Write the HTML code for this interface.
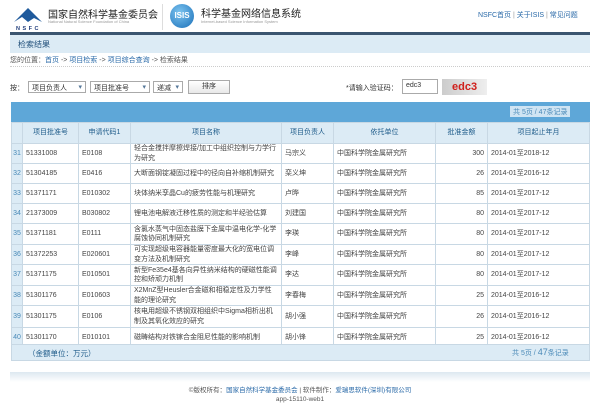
<!DOCTYPE html><html><head><meta charset="utf-8"><style>
*{margin:0;padding:0;box-sizing:border-box}
body{width:600px;height:408px;background:#fff;font-family:"Liberation Sans","Noto Sans CJK SC",sans-serif;font-size:7px;color:#333;position:relative;overflow:hidden}
.a{position:absolute;white-space:nowrap}
table{position:absolute;left:11px;top:122px;width:579px;border-collapse:collapse;table-layout:fixed}
td,th{border:1px solid #c8d8e4;font-size:7px;height:20px;padding:0 3px;line-height:9.5px;overflow:hidden}
th{background:#dcebf5;color:#1f5c8a;font-weight:normal;height:21px}
td.n{background:#dcebf5;color:#4a8ab8;padding:0 1px;text-align:center}
td{color:#444}
td.r{text-align:right}
.blue{color:#2a6aa8}
</style></head><body>
<svg class="a" style="left:12px;top:5px" width="38" height="26"><polygon points="2,17 16,3 30,17 22,13 16,17 10,12" fill="#1f5a9c"/><text x="4" y="25" font-size="5.5" font-weight="bold" fill="#1f3c7a" font-family="Liberation Sans" letter-spacing="2.5">NSFC</text></svg>
<div class="a" style="left:48px;top:6px;font-size:10px;color:#222">国家自然科学基金委员会</div>
<div class="a" style="left:48px;top:19px;font-size:4px;color:#999">National Natural Science Foundation of China</div>
<div class="a" style="left:162px;top:4px;width:1px;height:26px;background:#ddd"></div>
<div class="a" style="left:170px;top:4px;width:24px;height:24px;border-radius:50%;background:radial-gradient(circle at 40% 35%,#7cc4f0,#1a6fb8);color:#fff;font-size:8px;font-weight:bold;line-height:24px;text-align:center">ISIS</div>
<div class="a" style="left:201px;top:5px;font-size:10px;color:#222">科学基金网络信息系统</div>
<div class="a" style="left:201px;top:19px;font-size:4px;color:#999">Internet-based Science Information System</div>
<div class="a" style="left:478px;top:10px;font-size:7px;color:#2a6aa8">NSFC首页 <span style="color:#999">|</span> 关于ISIS <span style="color:#999">|</span> 常见问题</div>
<div class="a" style="left:10px;top:32px;width:580px;height:3px;background:#3b5570"></div>
<div class="a" style="left:10px;top:35px;width:580px;height:18px;background:#dcebf5;font-size:8px;color:#1f4e79;padding:4px 8px">检索结果</div>
<div class="a" style="left:10px;top:55px;font-size:7px;color:#555">您的位置：<span class="blue">首页</span> -&gt; <span class="blue">项目检索</span> -&gt; <span class="blue">项目综合查询</span> -&gt; 检索结果</div>
<div class="a" style="left:10px;top:66px;width:580px;border-top:1px dotted #ccc"></div>
<div class="a" style="left:10px;top:83px;font-size:7px">按：</div>
<div class="a" style="left:28px;top:81px;width:58px;height:12px;border:1px solid #aaa;font-size:7px;padding:1px 3px">项目负责人<span style="float:right;color:#579">▾</span></div>
<div class="a" style="left:90px;top:81px;width:60px;height:12px;border:1px solid #aaa;font-size:7px;padding:1px 3px">项目批准号<span style="float:right;color:#579">▾</span></div>
<div class="a" style="left:153px;top:81px;width:30px;height:12px;border:1px solid #aaa;font-size:7px;padding:1px 3px">递减<span style="float:right;color:#579">▾</span></div>
<div class="a" style="left:188px;top:80px;width:42px;height:14px;border:1px solid #aaa;background:linear-gradient(#fff,#e8e8e8);font-size:7px;text-align:center;line-height:12px">排序</div>
<div class="a" style="left:346px;top:83px;font-size:7px">*请输入验证码：</div>
<div class="a" style="left:402px;top:79px;width:36px;height:15px;border:1px solid #aaa;font-size:7px;padding:2px 3px">edc3</div>
<div class="a" style="left:442px;top:79px;width:45px;height:16px;background:linear-gradient(90deg,#ccc,#eee);color:#d0201c;font-size:11px;font-weight:bold;padding-left:10px;line-height:16px">edc3</div>
<div class="a" style="left:11px;top:102px;width:579px;height:20px;background:#5ea7d8"></div>
<div class="a" style="left:510px;top:106px;height:11px;background:#cfe4f3;color:#4a8ab8;font-size:7px;padding:1px 3px">共 5页 / 47条记录</div>
<table>
<colgroup><col style="width:11px"><col style="width:56px"><col style="width:52px"><col style="width:151px"><col style="width:52px"><col style="width:102px"><col style="width:52px"><col></colgroup>
<tr><th></th><th>项目批准号</th><th>申请代码1</th><th>项目名称</th><th>项目负责人</th><th>依托单位</th><th>批准金额</th><th>项目起止年月</th></tr>
<tr style="height:18px"><td class="n">31</td><td>51331008</td><td>E0108</td><td>轻合金搅拌摩擦焊接/加工中组织控制与力学行为研究</td><td>马宗义</td><td>中国科学院金属研究所</td><td class="r">300</td><td>2014-01至2018-12</td></tr>
<tr><td class="n">32</td><td>51304185</td><td>E0416</td><td>大断面钢锭凝固过程中的径向自补缩机制研究</td><td>栾义坤</td><td>中国科学院金属研究所</td><td class="r">26</td><td>2014-01至2016-12</td></tr>
<tr style="height:19px"><td class="n">33</td><td>51371171</td><td>E010302</td><td>块体纳米孪晶Cu的疲劳性能与机理研究</td><td>卢晔</td><td>中国科学院金属研究所</td><td class="r">85</td><td>2014-01至2017-12</td></tr>
<tr><td class="n">34</td><td>21373009</td><td>B030802</td><td>锂电池电解液迁移性质的测定和半经验估算</td><td>刘建国</td><td>中国科学院金属研究所</td><td class="r">80</td><td>2014-01至2017-12</td></tr>
<tr style="height:21px"><td class="n">35</td><td>51371181</td><td>E0111</td><td>含氯水蒸气中固态盐膜下金属中温电化学-化学腐蚀协同机制研究</td><td>李瑛</td><td>中国科学院金属研究所</td><td class="r">80</td><td>2014-01至2017-12</td></tr>
<tr><td class="n">36</td><td>51372253</td><td>E020601</td><td>可实现超级电容器能量密度最大化的宽电位调变方法及机制研究</td><td>李峰</td><td>中国科学院金属研究所</td><td class="r">80</td><td>2014-01至2017-12</td></tr>
<tr style="height:21px"><td class="n">37</td><td>51371175</td><td>E010501</td><td>新型Fe35e4基各向异性纳米结构的硬磁性能调控和矫顽力机制</td><td>李达</td><td>中国科学院金属研究所</td><td class="r">80</td><td>2014-01至2017-12</td></tr>
<tr><td class="n">38</td><td>51301176</td><td>E010603</td><td>X2MnZ型Heusler合金磁和相稳定性及力学性能的理论研究</td><td>李春梅</td><td>中国科学院金属研究所</td><td class="r">25</td><td>2014-01至2016-12</td></tr>
<tr style="height:22px"><td class="n">39</td><td>51301175</td><td>E0106</td><td>核电用超级不锈钢双相组织中Sigma相析出机制及其氧化效应的研究</td><td>胡小强</td><td>中国科学院金属研究所</td><td class="r">26</td><td>2014-01至2016-12</td></tr>
<tr style="height:19px"><td class="n">40</td><td>51301170</td><td>E010101</td><td>磁畴结构对铁镓合金阻尼性能的影响机制</td><td>胡小锋</td><td>中国科学院金属研究所</td><td class="r">25</td><td>2014-01至2016-12</td></tr>
</table>
<div class="a" style="left:11px;top:344px;width:579px;height:17px;background:#dcebf5;border:1px solid #c8d8e4"></div>
<div class="a" style="left:28px;top:348px;font-size:7.5px;color:#1f5c8a">（金额单位：万元）</div>
<div class="a" style="left:512px;top:347px;font-size:7px;color:#4a8ab8">共 5页 / <span style="font-size:9px">47</span>条记录</div>
<div class="a" style="left:10px;top:372px;width:580px;height:10px;background:linear-gradient(#dde8f0,#fff)"></div>
<div class="a" style="left:0;top:384px;width:600px;text-align:center;font-size:6.5px;color:#555">©版权所有：<span class="blue">国家自然科学基金委员会</span> | 软件制作：<span class="blue">爱瑞思软件(深圳)有限公司</span></div>
<div class="a" style="left:0;top:396px;width:600px;text-align:center;font-size:6.5px;color:#555">app-15110-web1</div>
</body></html>
